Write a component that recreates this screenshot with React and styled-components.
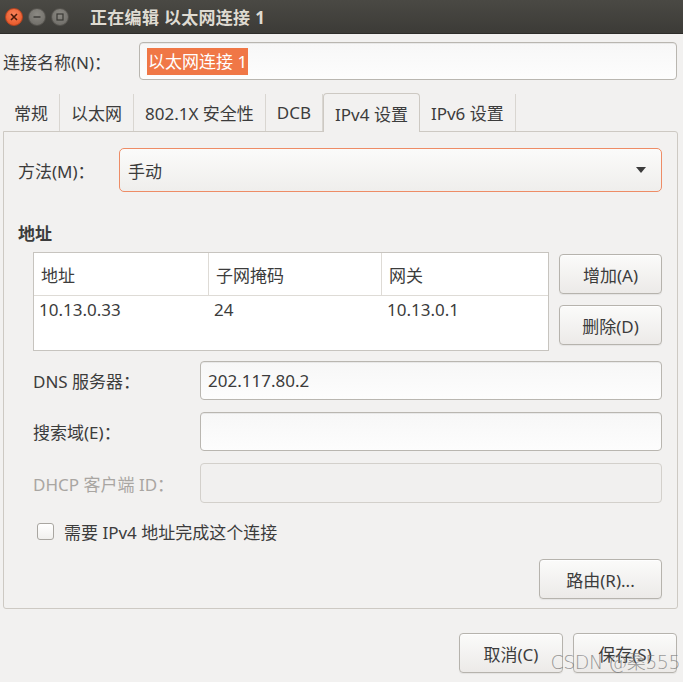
import React from 'react'
import styled, { createGlobalStyle } from 'styled-components'

const GlobalStyle = createGlobalStyle`
    html, body {
        margin: 0;
        padding: 0;
        background: #f2f1f0;
    }
    body {
        font-family: "Noto Sans", "Noto Sans CJK SC", sans-serif;
        font-size: 17px;
        color: #3c3c3c;
    }
`

const Window = styled.div`
    width: 683px;
    height: 682px;
    display: flex;
    flex-direction: column;
    background: #f2f1f0;
    position: relative;
    overflow: hidden;
`

const TitleBar = styled.div`
    height: 33px;
    flex-shrink: 0;
    display: flex;
    align-items: center;
    padding-left: 5px;
    background: linear-gradient(#4a4944, #3c3b37);
    border-bottom: 1px solid #2d2c29;
`

const WinButtons = styled.div`
    display: flex;
    gap: 5px;
    margin-right: 21px;
`

const WinButton = styled.span`
    width: 18px;
    height: 18px;
    border-radius: 50%;
    display: flex;
    align-items: center;
    justify-content: center;
    box-sizing: border-box;
    border: 1px solid ${p => (p.close ? '#b8431f' : '#55534e')};
    background: ${p =>
        p.close
            ? 'radial-gradient(circle at 50% 35%, #f9835b, #e4501f)'
            : 'radial-gradient(circle at 50% 35%, #8c8a84, #6a6863)'};
`

const TitleText = styled.div`
    color: #dfdbd2;
    font-weight: bold;
    font-size: 17px;
    letter-spacing: 0.3px;
`

const Body = styled.div`
    flex: 1;
    display: flex;
    flex-direction: column;
    padding: 8px 6px 0 3px;
`

const NameRow = styled.div`
    display: flex;
    align-items: center;
`

const NameLabel = styled.label`
    width: 136px;
    flex-shrink: 0;
`

const Entry = styled.div`
    flex: 1;
    height: ${p => p.h || 38}px;
    box-sizing: border-box;
    border: 1px solid ${p => (p.disabled ? '#d3d0cb' : '#b9b6b0')};
    border-radius: 4px;
    background: ${p => (p.disabled ? '#f1f0ef' : 'linear-gradient(#f7f7f7, #fdfdfd)')};
    display: flex;
    align-items: center;
    padding-left: 7px;
    box-shadow: ${p => (p.disabled ? 'none' : 'inset 0 1px 0 rgba(0,0,0,0.06)')};
`

const Selected = styled.span`
    background: #f07746;
    color: #fff;
    padding: 1px 1px;
    line-height: 25px;
`

const TabBar = styled.div`
    display: flex;
    align-items: flex-end;
    height: 38px;
    margin-top: 13px;
    position: relative;
    z-index: 1;
`

const Tab = styled.div`
    height: ${p => (p.active ? 39 : 37)}px;
    box-sizing: border-box;
    display: flex;
    align-items: center;
    padding: 0 11px;
    border-right: 1px solid #d9d6d1;
    margin-bottom: ${p => (p.active ? -1 : 0)}px;
    ${p =>
        p.active &&
        `
        background: #f2f1f0;
        border: 1px solid #cdc9c3;
        border-bottom: none;
        border-radius: 4px 4px 0 0;
    `}
`

const Panel = styled.div`
    width: 675px;
    height: 478px;
    box-sizing: border-box;
    border: 1px solid #cdc9c3;
    border-radius: 0 3px 3px 3px;
    padding: 16px 15px 0 14px;
    display: flex;
    flex-direction: column;
`

const MethodRow = styled.div`
    display: flex;
    align-items: center;
`

const MethodLabel = styled.label`
    width: 101px;
    flex-shrink: 0;
`

const Combo = styled.div`
    flex: 1;
    height: 44px;
    box-sizing: border-box;
    border: 1px solid #ee8c66;
    border-radius: 5px;
    background: linear-gradient(#fbfbfa, #efeeec);
    display: flex;
    align-items: center;
    justify-content: space-between;
    padding: 0 15px 0 8px;
`

const Arrow = styled.span`
    width: 0;
    height: 0;
    border-left: 5px solid transparent;
    border-right: 5px solid transparent;
    border-top: 6px solid #3c3c3c;
`

const SectionTitle = styled.div`
    font-weight: bold;
    margin-top: 28px;
`

const AddressArea = styled.div`
    display: flex;
    gap: 10px;
    margin-top: 7px;
    margin-left: 15px;
`

const Table = styled.div`
    width: 516px;
    height: 99px;
    box-sizing: border-box;
    border: 1px solid #c7c4bf;
    background: #fff;
`

const TableRow = styled.div`
    display: grid;
    grid-template-columns: 175px 173px 1fr;
    height: ${p => (p.header ? 42 : 30)}px;
    border-bottom: ${p => (p.header ? '1px solid #dedbd6' : 'none')};
`

const Cell = styled.div`
    height: 100%;
    display: flex;
    align-items: ${p => (p.header ? 'center' : 'flex-start')};
    padding-left: ${p => (p.header ? 7 : 5)}px;
    padding-top: ${p => (p.header ? 0 : 2)}px;
    box-sizing: border-box;
    border-right: ${p => (p.header && !p.last ? '1px solid #dedbd6' : 'none')};
`

const ButtonColumn = styled.div`
    display: flex;
    flex-direction: column;
    gap: 11px;
    padding-top: 2px;
`

const Button = styled.button`
    width: ${p => p.w || 103}px;
    height: 40px;
    box-sizing: border-box;
    border: 1px solid #b6b3ad;
    border-radius: 4px;
    background: linear-gradient(#fbfbfa, #eceae8);
    box-shadow: 0 1px 0 rgba(255,255,255,0.8) inset, 0 1px 1px rgba(0,0,0,0.06);
    font-family: inherit;
    font-size: 17px;
    color: #3c3c3c;
    padding: 0;
`

const Form = styled.div`
    display: grid;
    grid-template-columns: 167px 1fr;
    row-gap: 12px;
    align-items: center;
    margin-top: 10px;
    margin-left: 15px;
`

const FieldLabel = styled.label`
    color: ${p => (p.disabled ? '#a9a6a2' : '#3c3c3c')};
`

const CheckRow = styled.div`
    display: flex;
    align-items: center;
    gap: 10px;
    margin-top: 16px;
    margin-left: 19px;
`

const CheckBox = styled.span`
    width: 17px;
    height: 17px;
    box-sizing: border-box;
    border: 1px solid #a9a6a1;
    border-radius: 3px;
    background: linear-gradient(#ffffff, #f1f0ee);
`

const RouteRow = styled.div`
    display: flex;
    justify-content: flex-end;
    margin-top: 15px;
`

const Footer = styled.div`
    display: flex;
    justify-content: flex-end;
    gap: 10px;
    margin-top: 24px;
`

const Watermark = styled.div`
    position: absolute;
    right: 3px;
    bottom: 8px;
    font-family: "DejaVu Sans", "Noto Sans CJK SC", sans-serif;
    font-size: 19px;
    font-weight: 300;
    color: rgba(120, 120, 120, 0.75);
    letter-spacing: -0.5px;
`

function App() {
    return (
        <Window>
            <GlobalStyle />
            <TitleBar>
                <WinButtons>
                    <WinButton close>
                        <svg width="8" height="8" viewBox="0 0 8 8">
                            <path d="M1 1L7 7M7 1L1 7" stroke="#4a1a0a" strokeWidth="1.6" />
                        </svg>
                    </WinButton>
                    <WinButton>
                        <svg width="8" height="8" viewBox="0 0 8 8">
                            <path d="M0.5 4H7.5" stroke="#3a3935" strokeWidth="1.4" />
                        </svg>
                    </WinButton>
                    <WinButton>
                        <svg width="8" height="8" viewBox="0 0 8 8">
                            <rect x="1" y="1" width="6" height="6" fill="none" stroke="#3a3935" strokeWidth="1.2" />
                        </svg>
                    </WinButton>
                </WinButtons>
                <TitleText>正在编辑 以太网连接 1</TitleText>
            </TitleBar>

            <Body>
                <NameRow>
                    <NameLabel>连接名称(N)：</NameLabel>
                    <Entry>
                        <Selected>以太网连接 1</Selected>
                    </Entry>
                </NameRow>

                <TabBar>
                    <Tab>常规</Tab>
                    <Tab>以太网</Tab>
                    <Tab>802.1X 安全性</Tab>
                    <Tab>DCB</Tab>
                    <Tab active>IPv4 设置</Tab>
                    <Tab>IPv6 设置</Tab>
                </TabBar>

                <Panel>
                    <MethodRow>
                        <MethodLabel>方法(M)：</MethodLabel>
                        <Combo>
                            <span>手动</span>
                            <Arrow />
                        </Combo>
                    </MethodRow>

                    <SectionTitle>地址</SectionTitle>

                    <AddressArea>
                        <Table>
                            <TableRow header>
                                <Cell header>地址</Cell>
                                <Cell header>子网掩码</Cell>
                                <Cell header last>网关</Cell>
                            </TableRow>
                            <TableRow>
                                <Cell>10.13.0.33</Cell>
                                <Cell>24</Cell>
                                <Cell>10.13.0.1</Cell>
                            </TableRow>
                        </Table>
                        <ButtonColumn>
                            <Button>增加(A)</Button>
                            <Button>删除(D)</Button>
                        </ButtonColumn>
                    </AddressArea>

                    <Form>
                        <FieldLabel>DNS 服务器：</FieldLabel>
                        <Entry h={39}>202.117.80.2</Entry>
                        <FieldLabel>搜索域(E)：</FieldLabel>
                        <Entry h={39} />
                        <FieldLabel disabled>DHCP 客户端 ID：</FieldLabel>
                        <Entry h={40} disabled />
                    </Form>

                    <CheckRow>
                        <CheckBox />
                        <span>需要 IPv4 地址完成这个连接</span>
                    </CheckRow>

                    <RouteRow>
                        <Button w={123}>路由(R)...</Button>
                    </RouteRow>
                </Panel>

                <Footer>
                    <Button w={104}>取消(C)</Button>
                    <Button w={104}>保存(S)</Button>
                </Footer>
            </Body>
            <Watermark>CSDN @桑555</Watermark>
        </Window>
    )
}

export default App
